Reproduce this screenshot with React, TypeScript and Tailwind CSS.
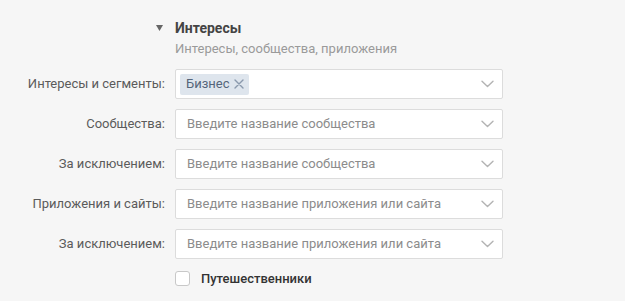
import React from "react";

function Chevron() {
  return (
    <svg width="13" height="8" viewBox="0 0 13 8" fill="none">
      <path d="M1 1.2L6.5 6.5L12 1.2" stroke="#b3b3b3" strokeWidth="1.4" strokeLinecap="round" strokeLinejoin="round" />
    </svg>
  );
}

function Field({ children, chip }: { children: React.ReactNode; chip?: boolean }) {
  return (
    <div
      className={
        chip
          ? "flex h-[30px] w-[328px] items-center rounded-[2px] border border-[#dcdcdc] bg-white pl-[4px] pr-[8px]"
          : "flex h-[30px] w-[328px] items-center rounded-[2px] border border-[#dcdcdc] bg-white pl-[11px] pr-[8px]"
      }
    >
      <div className="flex-1 min-w-0 flex items-center">{children}</div>
      <Chevron />
    </div>
  );
}

function Row({ label, children }: { label: string; children: React.ReactNode }) {
  return (
    <div className="flex items-center">
      <div className="w-[166px] pr-[1px] text-right text-[13px] text-[#5b5b5b]">{label}</div>
      <div className="ml-[9px]">{children}</div>
    </div>
  );
}

export default function App() {
  return (
    <div
      className="h-[301px] w-[625px] bg-[#f6f6f6] pt-[18px]"
      style={{ fontFamily: "Roboto, 'Noto Sans', sans-serif" }}
    >
      <div className="flex items-center h-[20px]">
        <div className="w-[163px] flex justify-end">
          <svg width="7" height="6" viewBox="0 0 7 6">
            <path d="M0 0H7L3.5 6Z" fill="#666" />
          </svg>
        </div>
        <div className="ml-[12px] text-[14px] font-bold text-[#444]">Интересы</div>
      </div>
      <div className="ml-[175px] mt-[2px] h-[18px] flex items-center text-[13px] text-[#9a9a9a]">
        Интересы, сообщества, приложения
      </div>
      <div className="mt-[11px] flex flex-col gap-[10px]">
        <Row label="Интересы и сегменты:">
          <Field chip>
            <div className="flex h-[21px] items-center rounded-[2px] bg-[#dee5ed] pl-[6px] pr-[5px] text-[13px] text-[#55657a]">
              <span>Бизнес</span>
              <svg className="ml-[4px]" width="10" height="10" viewBox="0 0 10 10">
                <path d="M1 1L9 9M9 1L1 9" stroke="#8a99ad" strokeWidth="1.4" strokeLinecap="round" />
              </svg>
            </div>
          </Field>
        </Row>
        <Row label="Сообщества:">
          <Field>
            <span className="text-[13px] text-[#8c8c8c]">Введите название сообщества</span>
          </Field>
        </Row>
        <Row label="За исключением:">
          <Field>
            <span className="text-[13px] text-[#8c8c8c]">Введите название сообщества</span>
          </Field>
        </Row>
        <Row label="Приложения и сайты:">
          <Field>
            <span className="text-[13px] text-[#8c8c8c]">Введите название приложения или сайта</span>
          </Field>
        </Row>
        <Row label="За исключением:">
          <Field>
            <span className="text-[13px] text-[#8c8c8c]">Введите название приложения или сайта</span>
          </Field>
        </Row>
      </div>
      <div className="ml-[175px] mt-[10px] flex items-center">
        <div className="h-[15px] w-[15px] rounded-[3px] border border-[#c8c8c8] bg-white" />
        <span className="ml-[11px] text-[13px] font-medium text-[#333]">Путешественники</span>
      </div>
    </div>
  );
}
